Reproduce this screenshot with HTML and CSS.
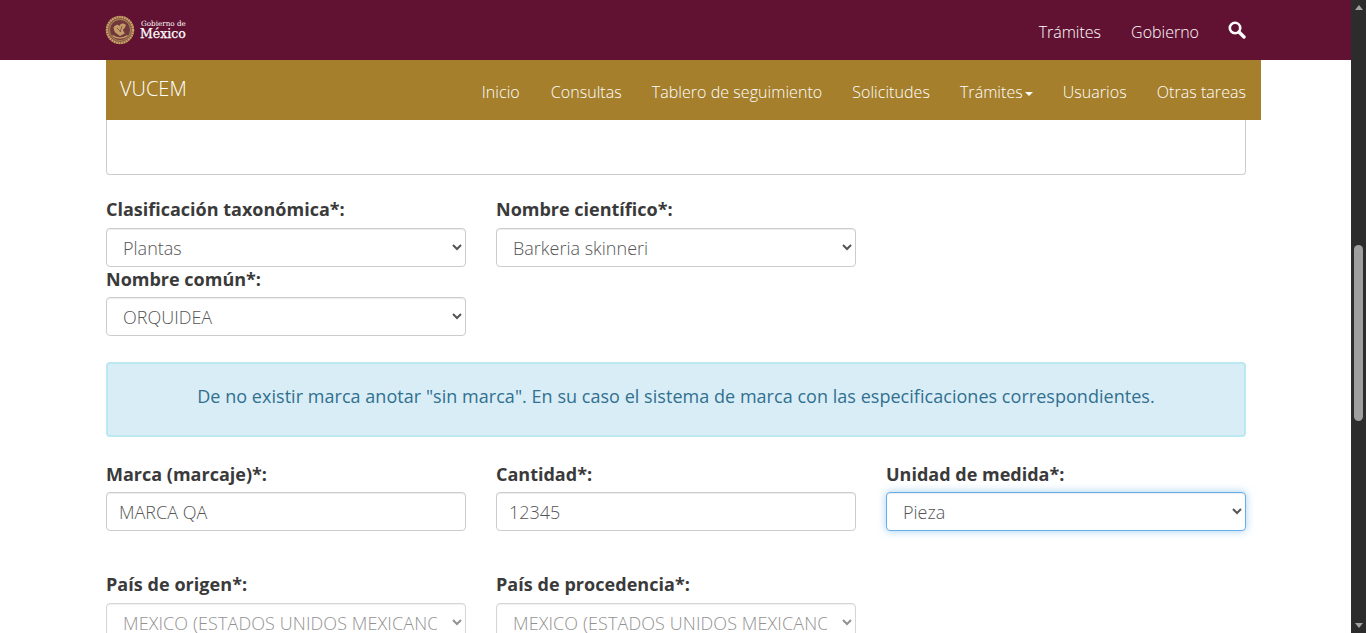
FILE: index.html
```html
<!DOCTYPE html>
<html lang="es">
<head>
<meta charset="utf-8">
<title>VUCEM</title>
<link rel="stylesheet" href="styles.css">
</head>
<body>
<div class="viewport">
  <div class="page">
    <header class="topbar">
      <a class="logo" href="#">
        <svg class="emblem" width="30" height="30" viewBox="0 0 30 30" aria-hidden="true">
          <circle cx="15" cy="15" r="14.3" fill="#8a5f42"/>
          <circle cx="15" cy="15" r="13" fill="none" stroke="#cfa56f" stroke-width="2.2" stroke-dasharray="1.6 .9"/>
          <circle cx="15" cy="15" r="10.5" fill="#70383a" stroke="#b78a5c" stroke-width=".8"/>
          <path d="M8.5 12.5c2-3 4.5-3.5 6-1.5 1-3 4-3.2 6.5-1-1 3-2.200 4-3.200 5l2 3.500-4.800 2.500-4.200-3c-1.300-1-2.200-3.500-2.300-6z" fill="#c49b68"/>
          <path d="M12 13l4 4M17 11l-2 6" stroke="#7a4a3c" stroke-width=".8" fill="none"/>
          <path d="M7.500 20.500c4 3.500 11 3.500 15 0" fill="none" stroke="#c9a26b" stroke-width="1.300"/>
        </svg>
        <span class="wordmark">
          <span class="wordmark-small">Gobierno de</span>
          <span class="wordmark-big">México</span>
        </span>
      </a>
      <nav class="topnav">
        <a href="#">Trámites</a>
        <a href="#">Gobierno</a>
        <a href="#" class="search" aria-label="Buscar">
          <svg width="18" height="18" viewBox="0 0 18 18" aria-hidden="true">
            <circle cx="7" cy="7" r="5.200" fill="none" stroke="#fff" stroke-width="2.600"/>
            <path d="M11 11 16 16" stroke="#fff" stroke-width="3.400" stroke-linecap="round"/>
          </svg>
        </a>
      </nav>
    </header>

    <div class="subnav">
      <a class="brand" href="#">VUCEM</a>
      <nav class="subnav-links">
        <a href="#">Inicio</a>
        <a href="#">Consultas</a>
        <a href="#">Tablero de seguimiento</a>
        <a href="#">Solicitudes</a>
        <a href="#">Trámites<span class="caret"></span></a>
        <a href="#">Usuarios</a>
        <a href="#">Otras tareas</a>
      </nav>
    </div>

    <main class="content">
      <div class="textarea-tail"></div>

      <div class="form-row first">
        <div class="field">
          <label>Clasificación taxonómica*:</label>
          <select class="control"><option>Plantas</option></select>
        </div>
        <div class="field">
          <label>Nombre científico*:</label>
          <select class="control"><option>Barkeria skinneri</option></select>
        </div>
      </div>
      <div class="form-row">
        <div class="field">
          <label>Nombre común*:</label>
          <select class="control"><option>ORQUIDEA</option></select>
        </div>
      </div>

      <div class="alert">De no existir marca anotar "sin marca". En su caso el sistema de marca con las especificaciones correspondientes.</div>

      <div class="form-row">
        <div class="field">
          <label>Marca (marcaje)*:</label>
          <input class="control" type="text" value="MARCA QA">
        </div>
        <div class="field">
          <label>Cantidad*:</label>
          <input class="control" type="text" value="12345">
        </div>
        <div class="field">
          <label>Unidad de medida*:</label>
          <select class="control focused"><option>Pieza</option></select>
        </div>
      </div>

      <div class="form-row last">
        <div class="field">
          <label>País de origen*:</label>
          <select class="control" disabled><option>MEXICO (ESTADOS UNIDOS MEXICANOS)</option></select>
        </div>
        <div class="field">
          <label>País de procedencia*:</label>
          <select class="control" disabled><option>MEXICO (ESTADOS UNIDOS MEXICANOS)</option></select>
        </div>
      </div>
    </main>
  </div>

  <div class="scrollbar" aria-hidden="true">
    <span class="arrow up"></span>
    <div class="track"><div class="thumb"></div></div>
    <span class="arrow down"></span>
  </div>
</div>
</body>
</html>
```

FILE: styles.css
```css
* { box-sizing: border-box; }
html, body { margin: 0; height: 100%; overflow: hidden; }
body {
  font-family: "Open Sans", "Noto Sans", sans-serif;
  font-size: 18px;
  color: #333;
  background: #fff;
}
a { text-decoration: none; color: inherit; }

.viewport { display: flex; height: 633px; overflow: hidden; }
.page { width: 1351px; flex: none; overflow: hidden; }

.topbar {
  height: 60px;
  background: #611232;
  display: flex;
  align-items: center;
  justify-content: space-between;
  padding: 0 105px 0 105px;
}
.logo { display: flex; align-items: center; gap: 5px; color: #fff; }
.emblem { display: block; }
.wordmark { display: flex; flex-direction: column; font-family: "DejaVu Serif", serif; }
.wordmark-small { font-size: 7.2px; line-height: 8px; margin-left: 1px; }
.wordmark-big { font-size: 12.5px; line-height: 12px; -webkit-text-stroke: .25px #fff; }
.topnav { display: flex; align-items: center; gap: 30px; color: #fff; font-size: 16px; font-weight: 300; padding-top: 4px; }
.topnav a { line-height: 22px; }
.search { display: flex; margin-top: -5px; margin-left: -1px; }
.search svg { display: block; }

.subnav {
  width: 1155px;
  height: 60px;
  margin-left: 106px;
  background: #a57f2c;
  color: #fff;
  display: flex;
  align-items: center;
  justify-content: space-between;
  padding: 0 15px 0 14px;
  font-size: 16px;
  font-weight: 300;
}
.brand { font-size: 20px; line-height: 22px; padding-bottom: 2px; }
.subnav-links { display: flex; gap: 30px; line-height: 22px; padding-top: 4px; letter-spacing: .05px; }
.subnav-links a { min-width: 39px; }
.caret {
  display: inline-block;
  width: 0;
  height: 0;
  margin-left: 2px;
  vertical-align: middle;
  border-top: 4px solid #fff;
  border-left: 4px solid transparent;
  border-right: 4px solid transparent;
}

.content { width: 1140px; margin-left: 106px; }
.textarea-tail {
  height: 55px;
  border: 1px solid #ccc;
  border-top: 0;
  border-radius: 0 0 4px 4px;
}

.form-row { display: grid; grid-template-columns: repeat(3, 360px); column-gap: 30px; }
.form-row.first { margin-top: 22px; }
.field { display: flex; flex-direction: column; }
label { font-weight: 700; line-height: 24px; margin-bottom: 7px; color: #3a3a3a; }
.form-row + .form-row label { margin-bottom: 6px; }

.control {
  display: block;
  width: 360px;
  height: 39px;
  padding: 6px 12px;
  font-family: inherit;
  font-size: 18px;
  font-weight: 300;
  color: #555;
  background: #fff;
  border: 1px solid #ccc;
  border-radius: 4px;
  box-shadow: inset 0 1px 1px rgba(0,0,0,.075);
}
select.control:disabled { color: #777; background: #fff; opacity: .8; letter-spacing: .1px; }
.focused {
  border-color: #66afe9;
  box-shadow: inset 0 1px 1px rgba(0,0,0,.075), 0 0 8px rgba(102,175,233,.6);
}

.alert {
  margin: 26px 0 25px;
  height: 75px;
  display: flex;
  align-items: center;
  justify-content: center;
  color: #31708f;
  background: #d9edf7;
  border: 2px solid #bce8f1;
  border-radius: 4px;
  padding-bottom: 7px;
  letter-spacing: .036px;
}
.alert + .form-row label { margin-bottom: 6px; }
.alert + .form-row + .form-row { margin-top: 41px; }
.alert + .form-row + .form-row label { margin-bottom: 7px; letter-spacing: .05px; }

.scrollbar {
  width: 15px;
  flex: none;
  background: #2c2c2c;
  display: flex;
  flex-direction: column;
  align-items: center;
}
.track { flex: 1; width: 100%; padding-top: 235px; }
.thumb { width: 9px; height: 176px; margin: 0 auto; background: #9f9f9f; border-radius: 5px; }
.arrow { width: 0; height: 0; border-left: 4px solid transparent; border-right: 4px solid transparent; flex: none; }
.arrow.up { margin-top: 5px; border-bottom: 5px solid #a3a3a3; }
.arrow.down { margin-bottom: 5px; border-top: 5px solid #a3a3a3; }
```
